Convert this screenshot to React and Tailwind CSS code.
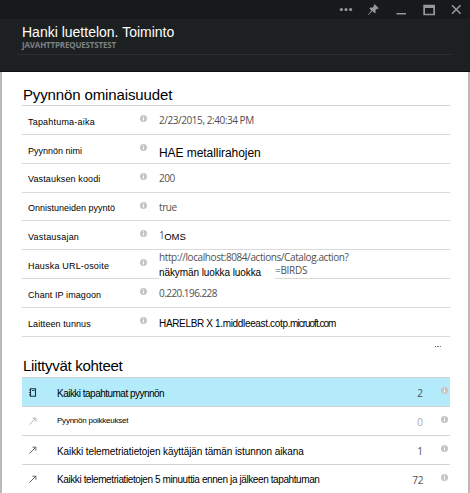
const SANS = "font-['Liberation_Sans',Arial,sans-serif] text-black";
const SEGOE = "font-['Open_Sans','Noto_Sans',sans-serif] text-[#505050]";

function Info() {
  return (
    <svg className="block h-[7px] w-[7px] shrink-0" viewBox="0 0 7 7">
      <circle cx="3.5" cy="3.5" r="3.5" fill="#c4c4c4" />
      <path d="M3.5 1.2v1M3.5 2.9v2.7" stroke="#fff" strokeWidth="1.1" />
    </svg>
  );
}

function Property({ height, label, labelClass, children }) {
  return (
    <div className={`flex border-b border-[#d9d9d9] pl-1.5 ${height}`}>
      <div className={`w-[112px] shrink-0 whitespace-nowrap text-[9px] leading-3 ${SANS} ${labelClass}`}>{label}</div>
      <div className="w-[19px] shrink-0 pt-[9px]"><Info /></div>
      <div className="min-w-0 flex-1 whitespace-nowrap">{children}</div>
    </div>
  );
}

function Arrow({ color }) {
  return (
    <svg className="block h-2 w-2" viewBox="0 0 8 8" fill="none" stroke={color} strokeWidth=".9">
      <path d="M.5 7.5l6.2-6.2M3.5 1.2h3.4v3.4" />
    </svg>
  );
}

function Book() {
  return (
    <svg className="block h-[9px] w-2" viewBox="0 0 8 9" fill="none" stroke="#17323c">
      <path d="M1.5.7h5v7.5h-5z" strokeWidth="1.1" />
      <path d="M3 2.5h2.5M0 2h1M0 4.5h1M0 7h1" strokeWidth=".9" />
    </svg>
  );
}

function Related({ icon, label, labelClass, count, countClass, rowClass }) {
  return (
    <div className={`flex h-[29px] border-b border-[#d3d3d3] pl-[7px] pr-[2px] ${rowClass}`}>
      <div className="w-7 shrink-0 pt-[10px]">{icon}</div>
      <div className={`flex-1 whitespace-nowrap leading-3 ${SANS} ${labelClass}`}>{label}</div>
      <div className={`pt-[9px] text-[10px] leading-3 ${SEGOE} ${countClass}`}>{count}</div>
      <div className="ml-[18px] pt-[9px]"><Info /></div>
    </div>
  );
}

export default function App() {
  return (
    <div className="flex h-[493px] w-[470px] flex-col overflow-hidden bg-white">
      <div className="flex h-[19px] shrink-0 items-start justify-end bg-[#17191b] pr-2 pt-1">
        <svg className="h-3 w-[124px]" viewBox="0 0 124 12" fill="none">
          <g fill="#969798">
            <circle cx="3.4" cy="5.5" r="1.6" />
            <circle cx="8" cy="5.5" r="1.6" />
            <circle cx="12.6" cy="5.5" r="1.6" />
            <path d="M36.5 0l4.3 4.3-1.2.6-.6-.1-1.6 1.7.3 1.9-1 .9-2.3-2.3L30.5 11l-.4-.4 3.3-4.2-2-2 .9-1 2 .3 1.7-1.7-.1-.7z" />
            <path d="M58.5 9h9.5v1.5h-9.5z" />
            <path fillRule="evenodd" d="M85.3.8h11.7v10.4H85.3zM87 4v5.7h8.3V4z" />
          </g>
          <path d="M114 1.2l8.6 8.6M122.6 1.2L114 9.8" stroke="#969798" strokeWidth="1.6" />
        </svg>
      </div>
      <div className="h-[53px] shrink-0 border-b border-[#0c0e0f] bg-[#1c2021] px-[18px]">
        <div className="h-9 border-b border-[#2b2f30] pl-1">
          <div className="whitespace-nowrap pt-[5px] font-['Liberation_Sans',Arial,sans-serif] text-[14px] leading-4 text-white">Hanki luettelon. Toiminto</div>
          <div className="font-['Open_Sans','Noto_Sans',sans-serif] text-[8px] font-bold leading-[9px] tracking-[-0.18px] text-[#7d8081]">JAVAHTTPREQUESTSTEST</div>
        </div>
      </div>
      <div className="flex-1 border-x-2 border-[#b9b9b9] pl-5 pr-[18px]">
        <h2 className={`h-[34px] border-b border-[#d3d3d3] pl-px pt-[15px] text-[15px] leading-4 tracking-[-0.13px] ${SANS}`}>Pyynnön ominaisuudet</h2>
        <Property height="h-[29px]" label="Tapahtuma-aika" labelClass="pt-[10px] tracking-[0.2px]">
          <div className={`pt-2 text-[10px] leading-3 tracking-[-0.44px] ${SEGOE}`}>2/23/2015, 2:40:34 PM</div>
        </Property>
        <Property height="h-[29px]" label="Pyynnön nimi" labelClass="pt-[10px]">
          <div className={`pt-3 text-[12px] leading-3 tracking-[-0.06px] ${SANS}`}>HAE metallirahojen</div>
        </Property>
        <Property height="h-[29px]" label="Vastauksen koodi" labelClass="pt-[9px] tracking-[0.13px]">
          <div className={`pt-2 text-[10px] leading-3 tracking-[-0.5px] ${SEGOE}`}>200</div>
        </Property>
        <Property height="h-[28px]" label="Onnistuneiden pyyntö" labelClass="pt-[9px]">
          <div className={`pt-2 text-[10px] leading-3 tracking-[-0.4px] ${SEGOE}`}>true</div>
        </Property>
        <Property height="h-[29px]" label="Vastausajan" labelClass="pt-[10px] tracking-[0.2px]">
          <div className="flex">
            <span className={`pt-2 text-[10px] leading-3 tracking-[-0.6px] ${SEGOE}`}>1</span>
            <span className={`pt-[10px] text-[9.500px] leading-3 ${SANS}`}>OMS</span>
          </div>
        </Property>
        <Property height="h-[29px]" label="Hauska URL-osoite" labelClass="pt-[10px] tracking-[0.18px]">
          <div className={`h-[14px] pt-px text-[10px] leading-3 tracking-[-0.41px] ${SEGOE}`}>http://localhost:8084/actions/Catalog.action?</div>
          <div className="flex">
            <span className={`h-[15px] w-[116px] bg-white pt-[3px] text-[10px] leading-3 tracking-[-0.09px] ${SANS}`}>näkymän luokka luokka</span>
            <span className={`text-[10px] leading-3 tracking-[-0.3px] ${SEGOE}`}>=BIRDS</span>
          </div>
        </Property>
        <Property height="h-[29px]" label="Chant IP imagoon" labelClass="pt-[10px] tracking-[0.08px]">
          <div className={`pt-[8px] text-[10px] leading-3 tracking-[-0.55px] ${SEGOE}`}>0.220.196.228</div>
        </Property>
        <Property height="h-[29px]" label="Laitteen tunnus" labelClass="pt-[10px] tracking-[0.08px]">
          <div className={`pt-[10px] text-[10px] leading-3 tracking-[-0.34px] ${SANS}`}>HARELBR X 1.middleeast.cotp.<span className="tracking-[-1px]">micruoft.com</span></div>
        </Property>
        <div className="flex h-[14px] items-end justify-end gap-px pb-[4px] pr-[9px]">
          <i className="h-px w-[1.5px] bg-[#777]" />
          <i className="h-px w-[1.5px] bg-[#777]" />
          <i className="h-px w-[1.5px] bg-[#777]" />
        </div>
        <h2 className={`h-[27px] border-b border-[#d3d3d3] pl-px pt-[7px] text-[15px] leading-4 tracking-[-0.28px] ${SANS}`}>Liittyvät kohteet</h2>
        <Related icon={<Book />} label="Kaikki tapahtumat pyynnön" labelClass="pt-[10px] text-[10px] tracking-[-0.52px]" count="2" rowClass="bg-[#b3ebfb]" />
        <Related icon={<Arrow color="#aaa" />} label="Pyynnön poikkeukset" labelClass="pt-[8px] text-[8px] tracking-[-0.23px]" count="0" countClass="opacity-50" />
        <Related icon={<Arrow color="#555" />} label="Kaikki telemetriatietojen käyttäjän tämän istunnon aikana" labelClass="pt-[10px] text-[10px] tracking-[-0.09px]" count="1" />
        <Related icon={<Arrow color="#555" />} label="Kaikki telemetriatietojen 5 minuuttia ennen ja jälkeen tapahtuman" labelClass="pt-[9px] text-[10px] tracking-[-0.4px]" count="72" countClass="tracking-[-0.4px]" />
      </div>
    </div>
  );
}
